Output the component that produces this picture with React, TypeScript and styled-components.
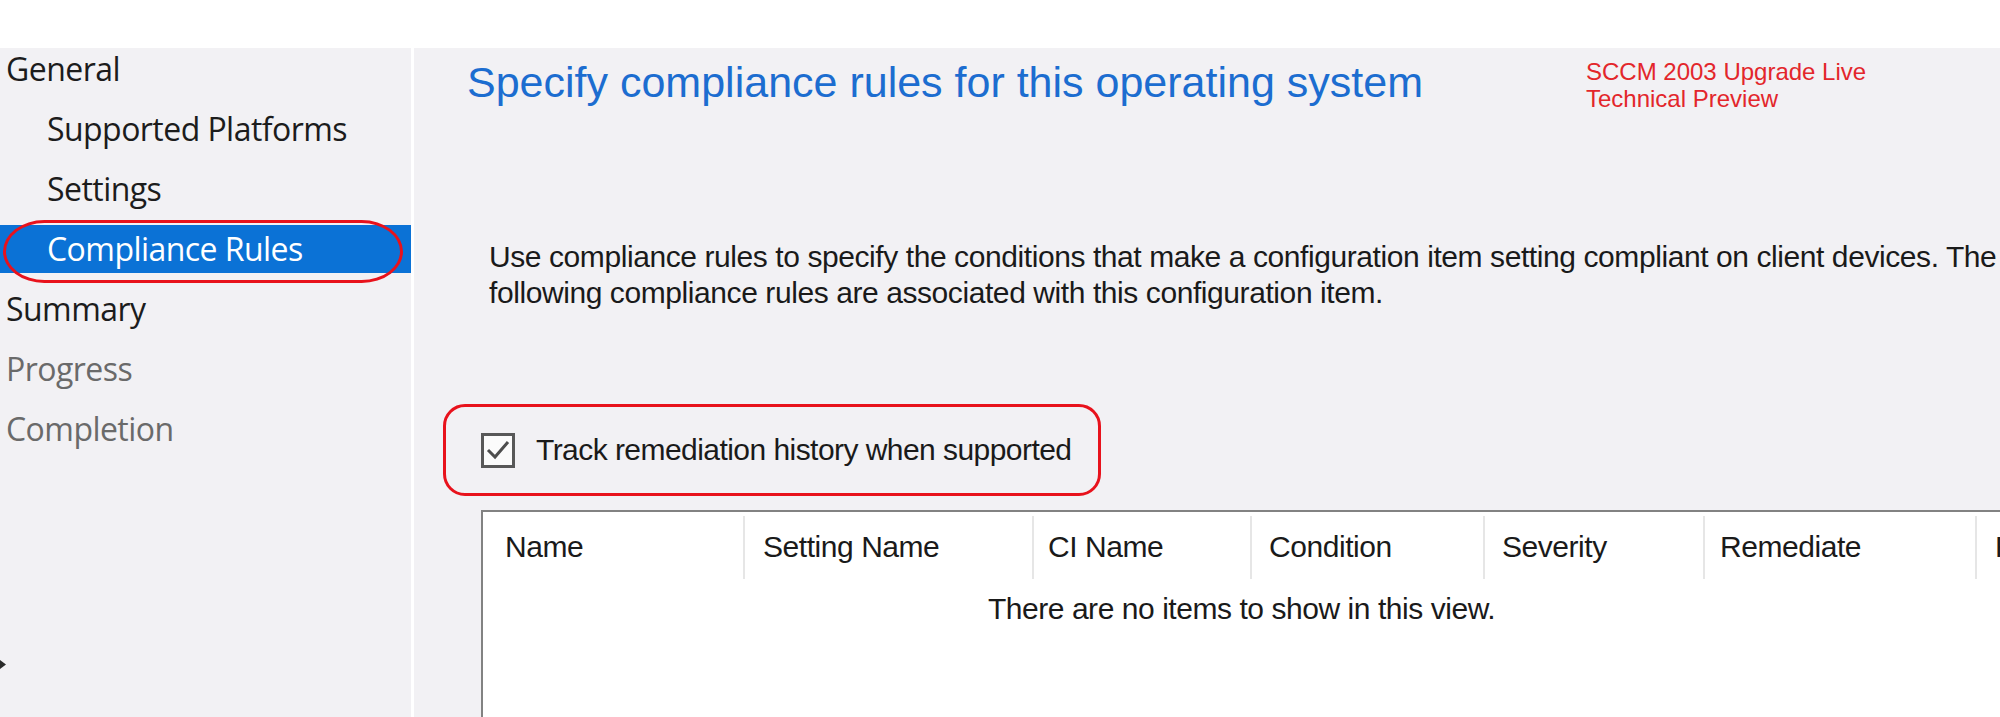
import React from "react";
import styled, { createGlobalStyle } from "styled-components";

const GlobalStyle = createGlobalStyle`
  html, body {
    margin: 0;
    padding: 0;
    background: #ffffff;
    overflow: hidden;
  }
`;

const Page = styled.div`
  width: 2000px;
  height: 717px;
  overflow: hidden;
  display: flex;
  flex-direction: column;
  background: #ffffff;
`;

const TopBand = styled.div`
  height: 48px;
  flex: none;
  background: #ffffff;
`;

const Body = styled.div`
  flex: 1;
  min-height: 0;
  display: flex;
  gap: 3px;
  background: #ffffff;
`;

const Sidebar = styled.nav`
  width: 411px;
  flex: none;
  background: #f2f1f4;
  display: flex;
  flex-direction: column;
`;

const NavList = styled.ul`
  list-style: none;
  margin: -3px 0 0;
  padding: 0;
  display: flex;
  flex-direction: column;
  gap: 12px;
  flex: none;
`;

type NavState = "normal" | "active" | "disabled";

const NavItem = styled.li<{ $level: number; $state: NavState }>`
  position: relative;
  height: 48px;
  line-height: 48px;
  padding-left: ${(p) => (p.$level === 1 ? 47 : 6)}px;
  font-family: "Open Sans", "Noto Sans", sans-serif;
  font-size: 32px;
  letter-spacing: -0.55px;
  white-space: nowrap;
  color: ${(p) =>
    p.$state === "active" ? "#ffffff" : p.$state === "disabled" ? "#6a6a6a" : "#1c1c1c"};
  background: ${(p) => (p.$state === "active" ? "#0b72d6" : "transparent")};
`;

const Ring = styled.span`
  position: absolute;
  left: 3px;
  right: 8px;
  top: -5px;
  bottom: -10px;
  border: 3.5px solid #e8121c;
  border-radius: 42px / 32px;
  pointer-events: none;
`;

const Marker = styled.svg`
  margin-top: 207px;
  width: 6px;
  height: 9px;
  display: block;
  flex: none;
`;

const Content = styled.main`
  flex: 1;
  min-width: 0;
  background: #f2f1f4;
  padding: 10px 0 0 29px;
  display: flex;
  flex-direction: column;
  align-items: flex-start;
  & > * {
    flex-shrink: 0;
  }
`;

const TitleRow = styled.div`
  display: flex;
  align-items: flex-start;
  margin-left: 24px;
`;

const Title = styled.h1`
  margin: 0;
  font-family: "Liberation Sans", Arial, sans-serif;
  font-weight: normal;
  font-size: 43px;
  color: #1c6dd0;
  white-space: nowrap;
`;

const Note = styled.div`
  margin-left: 163px;
  font-family: "Liberation Sans", Arial, sans-serif;
  font-size: 24px;
  line-height: 27px;
  color: #e3262b;
  white-space: nowrap;
`;

const Description = styled.p`
  margin: 127px 0 0 46px;
  width: 1580px;
  font-family: "Liberation Sans", Arial, sans-serif;
  font-size: 30px;
  letter-spacing: -0.42px;
  line-height: 36px;
  color: #1a1a1a;
`;

const OptionFrame = styled.div`
  margin-top: 93px;
  height: 92px;
  box-sizing: border-box;
  border: 3px solid #e8121c;
  border-radius: 22px;
  padding: 0 26px 0 35px;
  display: flex;
  align-items: center;
  gap: 21px;
`;

const CheckBox = styled.span`
  width: 34px;
  height: 35px;
  box-sizing: border-box;
  border: 3px solid #585858;
  background: #fbfbfb;
  display: flex;
  align-items: center;
  justify-content: center;
  flex: none;
`;

const OptionLabel = styled.span`
  font-family: "Liberation Sans", Arial, sans-serif;
  font-size: 30px;
  letter-spacing: -0.55px;
  line-height: 36px;
  color: #1a1a1a;
  white-space: nowrap;
`;

const ListView = styled.div`
  margin: 14px 0 0 38px;
  width: 1521px;
  height: 320px;
  box-sizing: border-box;
  border: 2px solid #828282;
  background: #ffffff;
  display: flex;
  flex-direction: column;
`;

const HeaderRow = styled.div`
  margin-top: 4px;
  height: 63px;
  display: flex;
  flex: none;
`;

const HeaderCell = styled.div<{ $w: number; $pad: number }>`
  width: ${(p) => p.$w}px;
  flex: none;
  box-sizing: border-box;
  padding: 13px 0 0 ${(p) => p.$pad}px;
  border-right: 2px solid #e6e6e6;
  font-family: "Liberation Sans", Arial, sans-serif;
  font-size: 30px;
  letter-spacing: -0.45px;
  line-height: 36px;
  color: #1a1a1a;
  white-space: nowrap;
  overflow: hidden;
`;

const EmptyMessage = styled.div`
  margin-top: 12px;
  flex: none;
  text-align: center;
  font-family: "Liberation Sans", Arial, sans-serif;
  font-size: 30px;
  letter-spacing: -0.45px;
  line-height: 36px;
  color: #1a1a1a;
`;

const navItems: { label: string; level: number; state: NavState }[] = [
  { label: "General", level: 0, state: "normal" },
  { label: "Supported Platforms", level: 1, state: "normal" },
  { label: "Settings", level: 1, state: "normal" },
  { label: "Compliance Rules", level: 1, state: "active" },
  { label: "Summary", level: 0, state: "normal" },
  { label: "Progress", level: 0, state: "disabled" },
  { label: "Completion", level: 0, state: "disabled" },
];

const columns: { label: string; w: number; pad: number }[] = [
  { label: "Name", w: 262, pad: 22 },
  { label: "Setting Name", w: 289, pad: 18 },
  { label: "CI Name", w: 218, pad: 14 },
  { label: "Condition", w: 233, pad: 17 },
  { label: "Severity", w: 220, pad: 17 },
  { label: "Remediate", w: 272, pad: 15 },
  { label: "Report Noncompliance", w: 300, pad: 18 },
];

export default function App() {
  return (
    <Page>
      <GlobalStyle />
      <TopBand />
      <Body>
        <Sidebar>
          <NavList>
            {navItems.map((item) => (
              <NavItem key={item.label} $level={item.level} $state={item.state}>
                {item.label}
                {item.state === "active" && <Ring />}
              </NavItem>
            ))}
          </NavList>
          <Marker viewBox="0 0 6 9">
            <path d="M0 0 L6 4.5 L0 9 Z" fill="#2a2a2a" />
          </Marker>
        </Sidebar>
        <Content>
          <TitleRow>
            <Title>Specify compliance rules for this operating system</Title>
            <Note>
              SCCM 2003 Upgrade Live
              <br />
              Technical Preview
            </Note>
          </TitleRow>
          <Description>
            Use compliance rules to specify the conditions that make a configuration item setting
            compliant on client devices. The following compliance rules are associated with this
            configuration item.
          </Description>
          <OptionFrame>
            <CheckBox>
              <svg width="24" height="22" viewBox="0 0 24 22">
                <path
                  d="M2 11 L9 18 L22 3"
                  fill="none"
                  stroke="#4d4d4d"
                  strokeWidth="3"
                  strokeLinejoin="miter"
                />
              </svg>
            </CheckBox>
            <OptionLabel>Track remediation history when supported</OptionLabel>
          </OptionFrame>
          <ListView>
            <HeaderRow>
              {columns.map((c) => (
                <HeaderCell key={c.label} $w={c.w} $pad={c.pad}>
                  {c.label}
                </HeaderCell>
              ))}
            </HeaderRow>
            <EmptyMessage>There are no items to show in this view.</EmptyMessage>
          </ListView>
        </Content>
      </Body>
    </Page>
  );
}
